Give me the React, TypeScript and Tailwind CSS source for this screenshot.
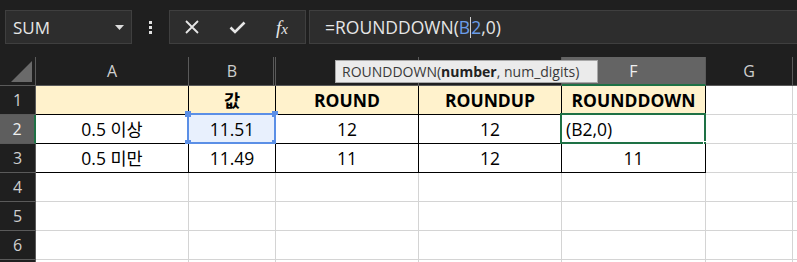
import React from "react";

const W = {
  rh: "w-[36px]",
  A: "w-[153px]",
  B: "w-[87px]",
  D: "w-[143px]",
  E: "w-[143px]",
  F: "w-[144px]",
  G: "w-[87px]",
};

function HeaderRow() {
  return (
    <div className="flex h-[29px] shrink-0 text-[16px]">
      <div className={`${W.rh} shrink-0 h-full border-r border-b border-[#5a5a5a] relative`}>
        <svg className="absolute left-[11px] top-[4px]" width="21" height="21" viewBox="0 0 21 21">
          <polygon points="21,0 21,21 0,21" fill="#6a6a6a" />
        </svg>
      </div>
      <div className={`${W.A} shrink-0 h-full border-r border-b border-[#5a5a5a] flex items-center justify-center text-[#cfcfcf]`}>A</div>
      <div className={`${W.B} shrink-0 h-full border-r border-b border-[#5a5a5a] flex items-center justify-center text-[#cfcfcf] relative`}>
        B
        <div className="absolute right-[1px] top-0 bottom-0 w-px bg-[#5a5a5a]" />
      </div>
      <div className={`${W.D} shrink-0 h-full border-r border-b border-[#5a5a5a]`} />
      <div className={`${W.E} shrink-0 h-full border-r border-b border-[#5a5a5a]`} />
      <div className={`${W.F} shrink-0 h-full border-r border-[#5a5a5a] border-b-2 border-b-[#1e7145] bg-[#646464] flex items-center justify-center text-[#f0f0f0]`}>F</div>
      <div className={`${W.G} shrink-0 h-full border-r border-b border-[#5a5a5a] flex items-center justify-center text-[#cfcfcf]`}>G</div>
      <div className="flex-1 h-full border-b border-[#5a5a5a]" />
    </div>
  );
}

type CellProps = {
  w: string;
  children?: React.ReactNode;
  black?: boolean;
  blackB?: boolean;
  yellow?: boolean;
  bold?: boolean;
  extra?: string;
};

function Cell({ w, children, black, blackB, yellow, bold, extra = "" }: CellProps) {
  const rc = black ? "border-r-black" : "border-r-[#d4d4d4]";
  const bc = blackB ? "border-b-black" : "border-b-[#d4d4d4]";
  return (
    <div
      className={`${w} shrink-0 h-full border-r border-b ${rc} ${bc} ${yellow ? "bg-[#fff2cc]" : "bg-white"} ${bold ? "font-bold" : ""} flex items-center justify-center text-[17.5px] text-black relative ${extra}`}
    >
      {children}
    </div>
  );
}

function RowHead({ n, active, hideLabel }: { n: number; active?: boolean; hideLabel?: boolean }) {
  return (
    <div
      className={`${W.rh} shrink-0 h-full border-b border-[#5a5a5a] flex items-center justify-center text-[16px] ${
        active ? "bg-[#5e5e5e] text-[#f0f0f0] border-r-2 border-r-[#1e7145]" : "border-r border-r-[#5a5a5a] text-[#cfcfcf]"
      }`}
    >
      {hideLabel ? null : n}
    </div>
  );
}

function Handle({ pos }: { pos: string }) {
  return <div className={`absolute w-[6px] h-[6px] bg-[#5b8fe6] ${pos}`} />;
}

function DataRow({ n, cells, active, hideLabel }: { n: number; cells: React.ReactNode; active?: boolean; hideLabel?: boolean }) {
  return (
    <div className="flex h-[29px] shrink-0">
      <RowHead n={n} active={active} hideLabel={hideLabel} />
      {cells}
      <div className="flex-1 h-full border-b border-[#d4d4d4] bg-white" />
    </div>
  );
}

export default function App() {
  return (
    <div className="w-[797px] h-[262px] bg-[#1f1f1f] overflow-hidden relative flex flex-col font-['Open_Sans','Noto_Sans_CJK_KR',sans-serif]">
      {/* toolbar */}
      <div className="flex items-center h-[34px] mt-[10px] shrink-0">
        <div className="ml-[5px] w-[127px] h-full bg-[#2d2d2d] border border-[#3f3f3f] flex items-center justify-between pl-[7px] pr-[7px]">
          <span className="text-[17px] text-[#e6e6e6] leading-none">SUM</span>
          <svg width="9" height="5" viewBox="0 0 9 5">
            <polygon points="0,0 9,0 4.5,5" fill="#dcdcdc" />
          </svg>
        </div>
        <div className="w-[37px] h-full flex items-center justify-center">
          <div className="flex flex-col gap-[2px]">
            <div className="w-[3px] h-[3px] bg-[#e0e0e0]" />
            <div className="w-[3px] h-[3px] bg-[#e0e0e0]" />
            <div className="w-[3px] h-[3px] bg-[#e0e0e0]" />
          </div>
        </div>
        <div className="w-[137px] h-full bg-[#2d2d2d] border border-[#3f3f3f] flex items-center">
          <div className="w-[44px] flex justify-center">
            <svg width="14" height="14" viewBox="0 0 14 14">
              <path d="M1 1 L13 13 M13 1 L1 13" stroke="#e6e6e6" strokeWidth="1.8" />
            </svg>
          </div>
          <div className="w-[46px] flex justify-center">
            <svg width="17" height="13" viewBox="0 0 17 13">
              <path d="M1.5 6.5 L6 11 L15.5 1.5" stroke="#e6e6e6" strokeWidth="2.6" fill="none" />
            </svg>
          </div>
          <div className="w-[44px] flex justify-center">
            <span className="font-['Liberation_Serif',serif] italic text-[#e6e6e6] text-[19px] leading-none">
              f<span className="text-[15px]">x</span>
            </span>
          </div>
        </div>
        <div className="ml-[3px] flex-1 h-full bg-[#2d2d2d] border border-[#3f3f3f] border-r-0 flex items-center pl-[15px] text-[17.5px] text-[#e6e6e6]">
          <span>=ROUNDDOWN(</span>
          <span className="text-[#6b9de8]">B</span>
          <span className="w-px h-[21px] bg-[#cfcfcf]" />
          <span className="text-[#6b9de8]">2</span>
          <span>,0)</span>
        </div>
      </div>
      <div className="h-[13px] shrink-0" />
      <HeaderRow />
      <DataRow
        n={1}
        cells={
          <>
            <Cell w={W.A} black blackB yellow />
            <Cell w={W.B} black blackB yellow bold>값</Cell>
            <Cell w={W.D} black blackB yellow bold>ROUND</Cell>
            <Cell w={W.E} black blackB yellow bold>ROUNDUP</Cell>
            <Cell w={W.F} black blackB yellow bold>ROUNDDOWN</Cell>
            <Cell w={W.G} />
          </>
        }
      />
      <DataRow
        n={2}
        active
        cells={
          <>
            <Cell w={W.A} black blackB>0.5 이상</Cell>
            <Cell w={W.B} black blackB extra="!bg-[#e8f0fd]">
              11.51
              <div className="absolute -left-[2px] -top-[2px] -right-[1px] -bottom-[1px] border-2 border-[#5b8fe6]" />
              <Handle pos="-left-[4px] -top-[4px]" />
              <Handle pos="-right-[3px] -top-[4px]" />
              <Handle pos="-left-[4px] -bottom-[3px]" />
              <Handle pos="-right-[3px] -bottom-[3px]" />
            </Cell>
            <Cell w={W.D} black blackB>12</Cell>
            <Cell w={W.E} black blackB>12</Cell>
            <Cell w={W.F} black blackB extra="!justify-start pl-[4px]">
              (B2,0)
              <div className="absolute -left-[2px] -top-[2px] -right-[1px] -bottom-[1px] border-2 border-[#1e7145]" />
              <div className="absolute -right-[3px] -bottom-[3px] w-[5px] h-[5px] bg-[#1e7145] border border-white" />
            </Cell>
            <Cell w={W.G} />
          </>
        }
      />
      <DataRow
        n={3}
        cells={
          <>
            <Cell w={W.A} black blackB>0.5 미만</Cell>
            <Cell w={W.B} black blackB>11.49</Cell>
            <Cell w={W.D} black blackB>11</Cell>
            <Cell w={W.E} black blackB>12</Cell>
            <Cell w={W.F} black blackB>11</Cell>
            <Cell w={W.G} />
          </>
        }
      />
      {[4, 5, 6, 7].map((n) => (
        <DataRow
          key={n}
          n={n}
          hideLabel={n === 7}
          cells={
            <>
              <Cell w={W.A} />
              <Cell w={W.B} />
              <Cell w={W.D} />
              <Cell w={W.E} />
              <Cell w={W.F} />
              <Cell w={W.G} />
            </>
          }
        />
      ))}
      {/* tooltip */}
      <div className="absolute left-[335px] top-[60px] w-[263px] h-[23px] bg-[#ebebeb] border border-[#a8a8a8] flex items-center pl-[6px] text-[14px] text-[#3a3a3a] whitespace-nowrap">
        ROUNDDOWN(<b className="font-bold text-[#222]">number</b>, num_digits)
      </div>
    </div>
  );
}
